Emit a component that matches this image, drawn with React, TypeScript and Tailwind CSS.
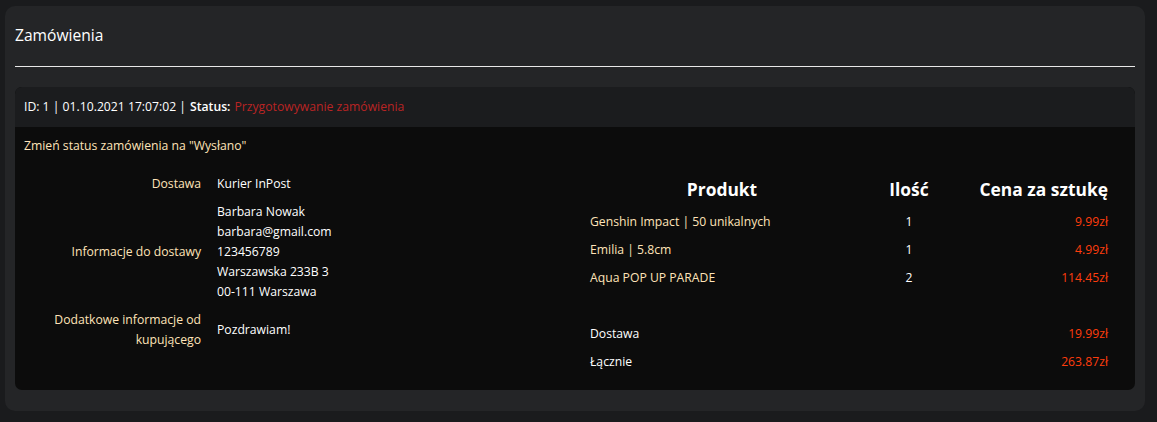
import React from 'react';

interface IItem {
	name: string;
	qty: number;
	price: string;
}

const items: IItem[] = [
	{ name: 'Genshin Impact | 50 unikalnych', qty: 1, price: '9.99zł' },
	{ name: 'Emilia | 5.8cm', qty: 1, price: '4.99zł' },
	{ name: 'Aqua POP UP PARADE', qty: 2, price: '114.45zł' },
];

const App = () => {
	return (
		<div
			className="min-h-[422px] w-full bg-[#1a1b1d] pt-[6px] pl-[5px]"
			style={{ fontFamily: '"Open Sans", "Noto Sans", sans-serif' }}
		>
			<div className="w-[1140px] rounded-[10px] bg-[#242527] px-[10px] pb-[21px]">
				{/* Title */}
				<div className="flex h-[60px] items-center text-[15.6px] font-medium text-white">Zamówienia</div>
				<div className="h-px bg-[#e8e8e8]" />

				{/* Order */}
				<div className="mt-[20px] rounded-[7px] bg-[#0c0c0c] text-[12.2px] font-medium leading-[20px]">
					<div className="flex h-[40px] items-center rounded-t-[7px] bg-[#1b1c1e] px-[9px] text-white">
						<span>ID: 1 | 01.10.2021 17:07:02 | </span>
						<span className="ml-1 font-semibold">Status:</span>
						<span className="ml-1 text-[#b92424]">Przygotowywanie zamówienia</span>
					</div>

					<div className="px-[9px] pt-[9px] pb-[14px]">
						<p className="text-[#ffe3b8]">Zmień status zamówienia na "Wysłano"</p>

						<div className="mt-[14px] flex">
							{/* Delivery info */}
							<div className="flex-1">
								<div className="grid grid-cols-[177px_1fr] gap-x-4">
									<div className="py-1 text-right text-[#ffe3b8]">Dostawa</div>
									<div className="py-1 text-white">Kurier InPost</div>

									<div className="flex items-center justify-end py-1 text-right text-[#ffe3b8]">
										Informacje do dostawy
									</div>
									<div className="py-1 text-white">
										<p>Barbara Nowak</p>
										<p>barbara@gmail.com</p>
										<p>123456789</p>
										<p>Warszawska 233B 3</p>
										<p>00-111 Warszawa</p>
									</div>

									<div className="py-1 text-right text-[#ffe3b8]">
										Dodatkowe informacje od kupującego
									</div>
									<div className="flex items-center py-1 text-white">Pozdrawiam!</div>
								</div>
							</div>

							{/* Products */}
							<div className="mr-[18px] w-[518px]">
								<div className="grid grid-cols-[264px_110px_144px]">
									<div className="flex h-[38px] items-center justify-center text-[17.4px] font-bold text-white">
										Produkt
									</div>
									<div className="flex h-[38px] items-center justify-center text-[17.4px] font-bold text-white">
										Ilość
									</div>
									<div className="flex h-[38px] items-center justify-end text-[17.4px] font-bold text-white">
										Cena za sztukę
									</div>

									{items.map((item) => (
										<React.Fragment key={item.name}>
											<div className="py-1 text-[#ffe3b8]">{item.name}</div>
											<div className="py-1 text-center text-white">{item.qty}</div>
											<div className="py-1 text-right text-[#ff3d0d]">{item.price}</div>
										</React.Fragment>
									))}

									<div className="col-span-3 h-[28px]" />

									<div className="py-1 text-white">Dostawa</div>
									<div className="py-1" />
									<div className="py-1 text-right text-[#ff3d0d]">19.99zł</div>

									<div className="py-1 text-white">Łącznie</div>
									<div className="py-1" />
									<div className="py-1 text-right text-[#ff3d0d]">263.87zł</div>
								</div>
							</div>
						</div>
					</div>
				</div>
			</div>
		</div>
	);
};

export default App;
